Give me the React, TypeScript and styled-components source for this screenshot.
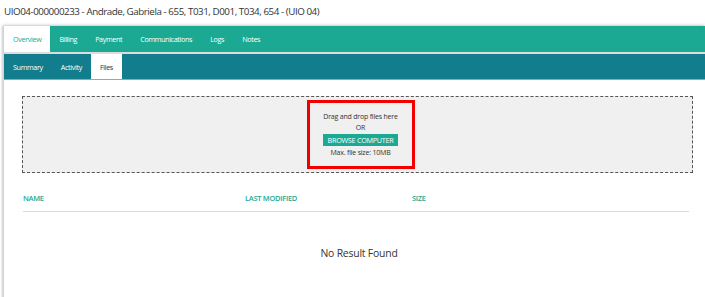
import React from "react";
import styled, { createGlobalStyle } from "styled-components";

const Global = createGlobalStyle`
  html, body { margin: 0; padding: 0; background: #fff; }
  body { font-family: "Open Sans", "Noto Sans", sans-serif; color: #333; }
`;

const Page = styled.div`
  width: 705px;
  height: 297px;
  overflow: hidden;
`;

const Title = styled.div`
  font-size: 9.8px;
  letter-spacing: -0.45px;
  color: #333;
  padding: 5px 0 0 4px;
  height: 17px;
  line-height: 14px;
`;

const Card = styled.div`
  margin: 4px 0 0 3px;
  border-left: 1px solid #cfd4d8;
  box-shadow: 0 -1px 3px rgba(0, 0, 0, 0.18), -1px 0 2px rgba(0, 0, 0, 0.12);
  height: 280px;
  background: #fff;
`;

const MainTabs = styled.div`
  display: flex;
  height: 26px;
  background: #1ba993;
  border-bottom: 2px solid #dcdcdc;
`;

const SubTabs = styled.div`
  display: flex;
  height: 25px;
  background: #127d8c;
  border-bottom: 1px solid #6fb6bf;
`;

const Tab = styled.div<{ $active?: boolean; $variant: "main" | "sub" }>`
  display: flex;
  align-items: center;
  padding: 0 9px;
  font-size: 7.2px;
  letter-spacing: -0.35px;
  background: ${(p) => (p.$active ? "#fff" : "transparent")};
  color: ${(p) =>
    p.$active ? (p.$variant === "main" ? "#1ba993" : "#333") : "#fff"};
`;

const Body = styled.div`
  padding: 16px 12px 0 18px;
`;

const DropZone = styled.div`
  height: 75px;
  background: #f0f0f0;
  border: 1px dashed #555;
  display: flex;
  justify-content: center;
  align-items: center;
`;

const Highlight = styled.div`
  width: 102px;
  height: 63px;
  margin-left: 6px;
  border: 3px solid #f20000;
  display: flex;
  flex-direction: column;
  align-items: center;
  justify-content: center;
  font-size: 7px;
  letter-spacing: -0.2px;
  color: #333;
  line-height: 11px;
`;

const Browse = styled.button`
  margin: 1px 0 1px;
  height: 12px;
  width: 75px;
  border: none;
  background: #1ba993;
  color: #fff;
  font-family: inherit;
  font-size: 7.2px;
  letter-spacing: -0.25px;
  padding: 0;
  line-height: 12px;
`;

const HeaderRow = styled.div`
  display: grid;
  grid-template-columns: 222px 167px 1fr;
  padding: 20px 0 8px 0;
  margin: 0 4px 0 1px;
  border-bottom: 1px solid #d5dde2;
  font-size: 7.5px;
  letter-spacing: -0.3px;
  color: #1ba993;
  font-weight: 600;
`;

const Empty = styled.div`
  text-align: center;
  padding-top: 34px;
  padding-left: 3px;
  font-size: 10.4px;
  letter-spacing: -0.2px;
  color: #333;
`;

const mainTabs = ["Overview", "Billing", "Payment", "Communications", "Logs", "Notes"];
const subTabs = ["Summary", "Activity", "Files"];

export default function App() {
  return (
    <Page>
      <Global />
      <Title>UIO04-000000233 - Andrade, Gabriela - 655, T031, D001, T034, 654 - (UIO 04)</Title>
      <Card>
        <MainTabs>
          {mainTabs.map((t) => (
            <Tab key={t} $variant="main" $active={t === "Overview"}>{t}</Tab>
          ))}
        </MainTabs>
        <SubTabs>
          {subTabs.map((t) => (
            <Tab key={t} $variant="sub" $active={t === "Files"}>{t}</Tab>
          ))}
        </SubTabs>
        <Body>
          <DropZone>
            <Highlight>
              <div>Drag and drop files here</div>
              <div>OR</div>
              <Browse>BROWSE COMPUTER</Browse>
              <div>Max. file size: 10MB</div>
            </Highlight>
          </DropZone>
          <HeaderRow>
            <span>NAME</span>
            <span>LAST MODIFIED</span>
            <span>SIZE</span>
          </HeaderRow>
          <Empty>No Result Found</Empty>
        </Body>
      </Card>
    </Page>
  );
}
